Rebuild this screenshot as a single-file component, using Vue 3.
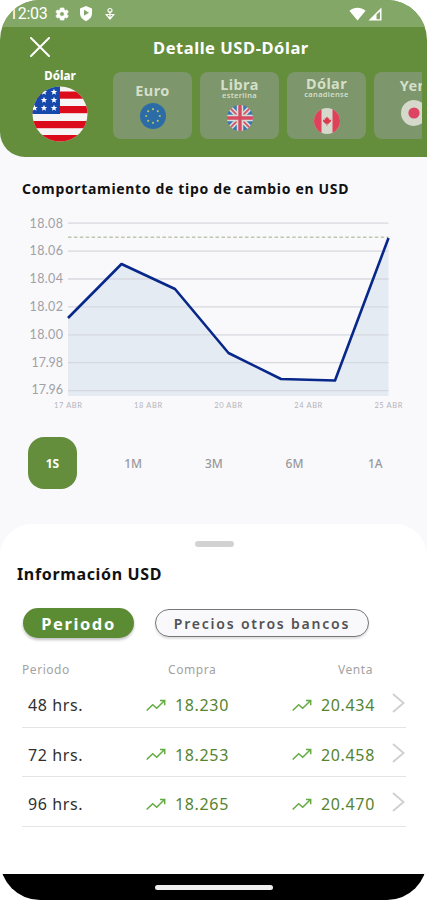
<template>
  <div class="screen">
    <header class="header">
      <div class="status-bar">
        <div class="status-left">
          <span class="clock">12:03</span>
          <svg class="gear" viewBox="0 0 24 24" width="16" height="16"><path d="M19.4 13a7.500 7.500 0 0 0 0-2l2.100-1.600-2-3.500-2.500 1a7.500 7.500 0 0 0-1.700-1L15 3H9.500l-.5 2.900a7.500 7.500 0 0 0-1.700 1l-2.500-1-2 3.500L4.900 11a7.500 7.500 0 0 0 0 2l-2.100 1.600 2 3.500 2.500-1a7.500 7.500 0 0 0 1.700 1l.5 2.900H15l.3-2.900a7.500 7.500 0 0 0 1.700-1l2.500 1 2-3.500zM12 15.500a3.500 3.500 0 1 1 0-7 3.500 3.500 0 0 1 0 7z" fill="currentColor" fill-rule="evenodd" stroke="currentColor" stroke-width="1" /></svg>
          <svg class="shield" viewBox="0 0 14 17" width="14" height="17"><path d="M7 1l6 2.400v4.800c0 3.600-2.400 6.300-6 7.800-3.600-1.500-6-4.200-6-7.800V3.400z" fill="currentColor" /><path d="M5 4.800l5 3-5 3z" fill="#83a766" /></svg>
          <svg class="usb" viewBox="0 0 10 14" width="10" height="14" fill="none" stroke="currentColor" stroke-width="1.200"><circle cx="5" cy="3.500" r="2" /><path d="M5 4v8M1.200 7.500L5 12l3.800-4.500zM1 7.500h8" /></svg>
        </div>
        <div class="status-right">
          <svg viewBox="0 0 17 14" width="17" height="14"><path d="M.4 3.700C5.200-.2 11.800-.2 16.600 3.700L8.500 13.600z" fill="currentColor" /></svg>
          <svg viewBox="0 0 14 14" width="14" height="14"><path d="M13.500.5v13H.5z" fill="currentColor" /><path d="M8.500 7.500l3.500-3v7.800H8.500z" fill="#83a766" /></svg>
        </div>
      </div>

      <div class="title-bar">
        <button class="close-btn">
          <svg viewBox="0 0 20 20" width="20" height="20"><path d="M1 1l18 18M19 1L1 19" stroke="currentColor" stroke-width="2" stroke-linecap="round" /></svg>
        </button>
        <h1 class="title">Detalle USD-Dólar</h1>
      </div>

      <div class="currencies">
        <div class="currency-active">
          <span class="active-name">Dólar</span>
          <svg viewBox="0 0 56 56" width="56" height="56">
            <clipPath id="us"><circle cx="28" cy="28" r="27.500" /></clipPath>
            <g clip-path="url(#us)">
              <rect width="56" height="56" fill="#f6f4f5" />
              <rect v-for="y in [5.5, 20, 35, 49]" :key="y" y="0" width="56" height="7.200" :transform="`translate(0 ${y})`" fill="#dc0b1c" />
              <rect width="28" height="28" fill="#1649ab" />
              <path v-for="(s, i) in stars" :key="i" :transform="`translate(${s[0]} ${s[1]})`" d="M0-3.200L.9-1h2.300L1.400.5 2 2.800 0 1.500-2 2.800-1.400.5-3.200-1h2.300z" fill="#fff" />
            </g>
          </svg>
        </div>

        <div v-for="item in currencies" :key="item.code" class="currency-card" :class="item.code">
          <span class="card-name">{{ item.name }}</span>
          <span v-if="item.sub" class="card-sub">{{ item.sub }}</span>
          <svg class="flag" viewBox="0 0 26 26" width="26" height="26">
            <clipPath :id="item.code"><circle cx="13" cy="13" r="13" /></clipPath>
            <g v-if="item.code === 'eur'" clip-path="url(#eur)">
              <rect width="26" height="26" fill="#2c6ca6" />
              <circle v-for="n in 8" :key="n" cx="13" cy="6.200" r="1.100" :transform="`rotate(${n * 45} 13 13)`" fill="#b5bd67" />
            </g>
            <g v-else-if="item.code === 'gbp'" clip-path="url(#gbp)">
              <rect width="26" height="26" fill="#3c74b5" />
              <path d="M0 0l26 26M26 0L0 26" stroke="#d5ddd4" stroke-width="5" />
              <path d="M0 0l26 26M26 0L0 26" stroke="#d6546b" stroke-width="1.800" />
              <path d="M13 0v26M0 13h26" stroke="#d5ddd4" stroke-width="6.500" />
              <path d="M13 0v26M0 13h26" stroke="#d84a62" stroke-width="3.400" />
            </g>
            <g v-else-if="item.code === 'cad'" clip-path="url(#cad)">
              <rect width="26" height="26" fill="#d4d9cc" />
              <path d="M0 0h7.500v26H0zM18.500 0H26v26h-7.500z" fill="#df405a" />
              <path d="M13 8.500l1.200 2 1.200-.5-.2 2.300 2-.8-.4 2-2.300 2.200h-1.100v2h-.8v-2h-1.100l-2.300-2.200-.4-2 2 .8-.2-2.300 1.200.5z" fill="#dc3850" />
            </g>
            <g v-else clip-path="url(#jpy)">
              <rect width="26" height="26" fill="#d4d9cc" />
              <circle cx="13" cy="13" r="5.600" fill="#dd4461" />
            </g>
          </svg>
        </div>
      </div>
    </header>

    <section class="chart-section">
      <h2 class="chart-title">Comportamiento de tipo de cambio en USD</h2>
      <svg class="chart" viewBox="0 210 427 210" width="427" height="210">
        <polygon :points="`68,396 ${line} 388.500,396`" fill="#e5ebf3" />
        <g v-for="(label, i) in yLabels" :key="label">
          <line x1="68" x2="388.500" :y1="223.200 + i * 27.900" :y2="223.200 + i * 27.900" stroke="#d6d8df" stroke-width="1.300" />
          <text class="y-label" x="63" :y="227.600 + i * 27.800" text-anchor="end" :textLength="i > 4 ? 31.500 : 33.500">{{ label }}</text>
        </g>
        <line x1="68" x2="388.500" y1="237.300" y2="237.300" stroke="#bec7b1" stroke-width="1.500" stroke-dasharray="3.500 2.400" />
        <polyline :points="line" fill="none" stroke="#07278a" stroke-width="2.600" stroke-linejoin="round" />
        <text v-for="(label, i) in xLabels" :key="label" class="x-label" :x="68 + i * 80.100" y="407.500" text-anchor="middle" textLength="28">{{ label }}</text>
      </svg>
      <div class="ranges">
        <button v-for="range in ranges" :key="range" class="range-btn" :class="{ active: range === activeRange }" @click="activeRange = range">{{ range }}</button>
      </div>
    </section>

    <section class="sheet">
      <div class="handle"></div>
      <h2 class="sheet-title">Información USD</h2>
      <div class="tabs">
        <button class="tab primary">Periodo</button>
        <button class="tab outline">Precios otros bancos</button>
      </div>
      <div class="table-head">
        <span>Periodo</span>
        <span>Compra</span>
        <span>Venta</span>
      </div>
      <div v-for="row in rows" :key="row.period" class="table-row">
        <span class="period">{{ row.period }}</span>
        <span v-for="price in [row.buy, row.sell]" :key="price" class="price">
          <svg viewBox="0 0 20 13" width="20" height="13" fill="none" stroke="#62ac42" stroke-width="1.500"><path d="M.7 11.500l6-5.800 4 3.500 7.600-7.500M14 1.500h4.700v4.700" /></svg>
          <span class="amount">{{ price }}</span>
        </span>
        <svg class="chevron" viewBox="0 0 13 20" width="13" height="20"><path d="M1 1l10.500 9L1 19" fill="none" stroke="#cfcfcf" stroke-width="1.800" /></svg>
      </div>
    </section>

    <footer class="nav-bar">
      <div class="home-indicator"></div>
    </footer>
  </div>
</template>

<script setup>
import { ref } from 'vue';

const currencies = [
  { code: 'eur', name: 'Euro' },
  { code: 'gbp', name: 'Libra', sub: 'esterlina' },
  { code: 'cad', name: 'Dólar', sub: 'canadiense' },
  { code: 'jpy', name: 'Yen' }
];
const stars = [[12, 6], [22, 6], [12, 14], [22, 14], [2.5, 22], [12, 22], [22, 22]];

const yLabels = ['18.08', '18.06', '18.04', '18.02', '18.00', '17.98', '17.96'];
const xLabels = ['17 ABR', '18 ABR', '20 ABR', '24 ABR', '25 ABR'];
const line = '68,318 121.5,264 175,289 228.5,353 281,379 335,380.5 388.5,238';

const ranges = ['1S', '1M', '3M', '6M', '1A'];
const activeRange = ref('1S');

const rows = [
  { period: '48 hrs.', buy: '18.230', sell: '20.434' },
  { period: '72 hrs.', buy: '18.253', sell: '20.458' },
  { period: '96 hrs.', buy: '18.265', sell: '20.470' }
];
</script>

<style>
body {
  margin: 0;
  background: #fff;
}
</style>

<style scoped>
.screen {
  width: 427px;
  height: 900px;
  display: flex;
  flex-direction: column;
  overflow: hidden;
  border-radius: 40px;
  background: #f9f9fc;
  font-family: "Noto Sans", "Open Sans", sans-serif;
}
h1, h2 {
  margin: 0;
  white-space: nowrap;
}
button {
  border: none;
  background: none;
  padding: 0;
  font-family: inherit;
  cursor: pointer;
}
.header {
  height: 157px;
  flex-shrink: 0;
  background: #648e3c;
  border-bottom-left-radius: 25px;
  color: #fff;
  overflow: hidden;
}
.status-bar {
  height: 27px;
  background: #83a766;
  display: flex;
  justify-content: space-between;
}
.status-left,
.status-right {
  display: flex;
  align-items: center;
}
.status-left {
  padding-left: 9px;
}
.status-right {
  gap: 2px;
  padding-right: 45px;
}
.clock {
  width: 45px;
  font-family: Roboto, sans-serif;
  font-size: 16px;
  letter-spacing: -0.3px;
}
.shield {
  margin-left: 9px;
}
.usb {
  margin-left: 12px;
}
.title-bar {
  height: 40px;
  display: flex;
  align-items: center;
}
.close-btn {
  width: 20px;
  height: 20px;
  margin-left: 30px;
  color: #fff;
}
.close-btn svg {
  display: block;
}
.title {
  margin-left: 103px;
  padding-top: 1px;
  font-size: 16.5px;
  font-weight: 700;
  letter-spacing: 0.55px;
}
.currencies {
  display: flex;
  gap: 8px;
  margin-right: 5px;
  overflow: hidden;
}
.currency-active {
  width: 56px;
  flex-shrink: 0;
  margin: 0 17px 0 32px;
  display: flex;
  flex-direction: column;
  align-items: center;
}
.active-name {
  height: 19px;
  line-height: 17px;
  font-size: 11.5px;
  font-weight: 800;
}
.currency-card {
  width: 79px;
  height: 67px;
  flex-shrink: 0;
  box-sizing: border-box;
  margin-top: 5px;
  padding-top: 8px;
  border-radius: 8px;
  background: #7d966b;
  color: #d4dfca;
  display: flex;
  flex-direction: column;
  align-items: center;
}
.card-name {
  line-height: 20px;
  font-size: 14.5px;
  font-weight: 700;
  letter-spacing: 0.4px;
}
.card-sub {
  line-height: 8px;
  margin-top: -3px;
  font-size: 7.5px;
  font-weight: 600;
  letter-spacing: 0.3px;
}
.flag {
  margin-top: 3px;
}
.eur .flag {
  margin-top: 3px;
}
.gbp,
.cad {
  padding-top: 2px;
}
.gbp .flag {
  margin-top: 6px;
}
.cad {
  padding-top: 1px;
}
.cad .flag {
  margin-top: 10px;
}
.jpy {
  padding-top: 3px;
}
.jpy .flag {
  margin-top: 5px;
}
.chart-section {
  height: 367px;
  flex-shrink: 0;
}
.chart-title {
  padding: 22px 0 0 22px;
  height: 31px;
  line-height: 20px;
  font-size: 14px;
  font-weight: 700;
  letter-spacing: 0.67px;
  color: #111;
}
.chart {
  display: block;
}
.y-label {
  font-family: Lato, sans-serif;
  font-size: 12.5px;
  fill: #a0a0a5;
}
.x-label {
  font-family: Lato, sans-serif;
  font-size: 7.5px;
  fill: #b4b4ba;
}
.ranges {
  display: flex;
  gap: 31.7px;
  padding: 17px 0 0 28px;
}
.range-btn {
  width: 49px;
  height: 52px;
  border-radius: 16px;
  font-size: 12px;
  font-weight: 500;
  color: #98989b;
}
.range-btn.active {
  background: #648e3c;
  color: #fff;
  font-weight: 700;
}
.sheet {
  height: 350px;
  flex-shrink: 0;
  box-sizing: border-box;
  padding: 17px 21px 0 22px;
  border-radius: 32px 32px 0 0;
  background: #fff;
}
.handle {
  width: 39px;
  height: 6px;
  margin-left: 173px;
  border-radius: 3px;
  background: #d2d2d2;
}
.sheet-title {
  margin: 16px 0 0 -5px;
  line-height: 22px;
  font-size: 16px;
  font-weight: 700;
  letter-spacing: 0.65px;
  color: #111;
}
.tabs {
  display: flex;
  align-items: center;
  gap: 21px;
  margin: 23px 0 0 1px;
}
.tab {
  box-sizing: border-box;
  border-radius: 16px;
  white-space: nowrap;
}
.tab.primary {
  width: 111px;
  height: 30px;
  background: #5b8c33;
  color: #fff;
  font-size: 16.5px;
  font-weight: 700;
  letter-spacing: 1.6px;
  box-shadow: 0 2px 3px rgba(0, 0, 0, 0.25);
}
.tab.outline {
  width: 214px;
  height: 28px;
  border: 1px solid #77777a;
  background: #f9f9fb;
  color: #525254;
  font-size: 14px;
  font-weight: 600;
  letter-spacing: 1.8px;
  box-shadow: 0 2px 2px rgba(0, 0, 0, 0.12);
}
.table-head {
  display: grid;
  grid-template-columns: 146px 170px 1fr;
  height: 40px;
  line-height: 20px;
  padding-top: 22px;
  box-sizing: border-box;
  font-size: 12px;
  color: #a2a2a2;
  letter-spacing: 0.55px;
}
.table-row {
  height: 49.6px;
  box-sizing: border-box;
  border-bottom: 1.5px solid #e4e4e4;
  display: grid;
  grid-template-columns: 124px 146px 1fr 14px;
  align-items: center;
}
.period {
  padding: 6px 0 0 6px;
  font-size: 16px;
  letter-spacing: 0.6px;
  color: #303030;
}
.price {
  display: flex;
  align-items: center;
  gap: 9px;
  padding-top: 6px;
}
.amount {
  color: #56842f;
  font-size: 16px;
  letter-spacing: 0.65px;
}
.chevron {
  margin-top: 2px;
}
.nav-bar {
  height: 26px;
  flex-shrink: 0;
  background: #000;
  display: flex;
  justify-content: center;
  padding-top: 11px;
  box-sizing: border-box;
}
.home-indicator {
  width: 118px;
  height: 5px;
  border-radius: 3px;
  background: #eee;
}
</style>
